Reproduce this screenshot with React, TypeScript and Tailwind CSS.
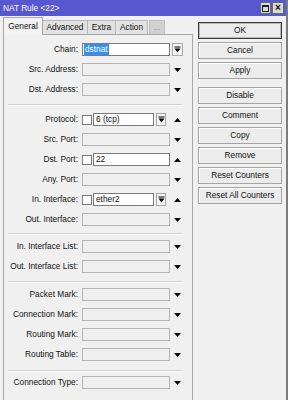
import React from 'react';

const DownArrow = () => (
  <svg width="7" height="4" viewBox="0 0 7 4" className="block">
    <polygon points="0,0 7,0 3.5,4" fill="#000" />
  </svg>
);

const UpArrow = () => (
  <svg width="7" height="4" viewBox="0 0 7 4" className="block">
    <polygon points="0,4 7,4 3.5,0" fill="#000" />
  </svg>
);

const DropButton = ({ className = '' }: { className?: string }) => (
  <div className={`h-full flex items-center justify-center bg-[#f4f4f4] border border-[#a8a8a8] ${className}`}>
    <svg width="7" height="7" viewBox="0 0 7 7" className="block">
      <rect x="0.5" y="0.5" width="6" height="1" fill="#000" />
      <polygon points="0.5,2.5 6.5,2.5 3.5,6.5" fill="#000" />
    </svg>
  </div>
);

const Check = () => <div className="w-[10px] h-[10px] bg-white border border-[#7a7a7a] shrink-0" />;

const Empty = () => <div className="w-full h-full bg-[#f0f0f0] border border-[#b4b4b4]" />;

const Input = ({ value, selected, className = '' }: { value: string; selected?: boolean; className?: string }) => (
  <div className={`h-full bg-white border border-[#7a7a7a] flex items-center pl-[1px] ${className}`}>
    {selected ? (
      <span className="bg-[#3390f0] text-white px-[1px] leading-[11px]">{value}</span>
    ) : (
      <span className="px-[1px]">{value}</span>
    )}
  </div>
);

const Row = ({
  label,
  children,
  arrow,
  className = '',
}: {
  label: string;
  children: React.ReactNode;
  arrow?: React.ReactNode;
  className?: string;
}) => (
  <div className={`flex items-center h-[13px] ${className}`}>
    <div className="w-[74px] text-right whitespace-nowrap">{label}:</div>
    <div className="ml-[4px] w-[88px] h-full flex items-center">{children}</div>
    <div className="w-[14px] h-full flex items-center justify-center">{arrow}</div>
  </div>
);

const Sep = ({ className = '' }: { className?: string }) => (
  <div className={`ml-[4px] w-[175px] h-[2px] border-t border-[#d2d2d2] border-b border-b-white ${className}`} />
);

const Btn = ({ label, primary, className = '' }: { label: string; primary?: boolean; className?: string }) => (
  <div
    className={`h-[17px] w-[84px] flex items-center justify-center bg-[#ececec] ${
      primary
        ? 'border border-[#3c3c3c] shadow-[inset_0_0_0_1px_#b8b8b8]'
        : 'border border-[#a4a4a4] shadow-[inset_1px_1px_0_#ffffff]'
    } ${className}`}
  >
    {label}
  </div>
);

const tabs = [
  { name: 'Advanced', w: 'w-[45px]' },
  { name: 'Extra', w: 'w-[28px]' },
  { name: 'Action', w: 'w-[32px]' },
];

export default function App() {
  return (
    <div
      className="w-[288px] h-[400px] overflow-hidden bg-[#f0f0f0] border-r-2 border-[#7c7c7c] flex flex-col text-[8.3px] text-[#111] leading-none"
      style={{ fontFamily: '"Liberation Sans", Arial, sans-serif' }}
    >
      {/* Title bar */}
      <div className="h-[16px] bg-[#5757cf] flex items-center pl-[3px] pr-[2px] text-white">
        <span className="flex-1">NAT Rule &lt;22&gt;</span>
        <div className="flex gap-[1px]">
          <div className="w-[11px] h-[12px] bg-[#d8d8d8] border border-[#6a6a6a] flex items-center justify-center">
            <div className="w-[7px] h-[7px] border border-[#222] border-t-2" />
          </div>
          <div className="w-[12px] h-[12px] bg-[#d8d8d8] border border-[#6a6a6a] flex items-center justify-center text-[#111] text-[10px] font-bold">
            ×
          </div>
        </div>
      </div>

      <div className="flex flex-1">
        {/* Left side: tabs and form */}
        <div className="w-[193px] pl-[3px] flex flex-col">
          <div className="h-[18px] flex items-end">
            <div className="relative z-10 -mb-[1px] w-[40px] h-[18px] bg-[#f3f3f3] border border-b-0 border-[#a8a8a8] flex items-center justify-center">
              General
            </div>
            {tabs.map(t => (
              <div
                key={t.name}
                className={`${t.w} h-[14px] bg-[#e2e2e2] border border-b-0 border-l-0 border-[#b8b8b8] flex items-center justify-center`}
              >
                {t.name}
              </div>
            ))}
            <div className="ml-[1px] w-[16px] h-[14px] bg-[#d2d2d2] border border-b-0 border-[#bdbdbd] flex items-center justify-center text-[#8a8a8a]">
              ...
            </div>
          </div>

          <div className="flex-1 border border-b-0 border-[#a8a8a8] pt-[8px] flex flex-col">
            <Row label="Chain" arrow={<DropButton className="ml-[1px] w-[11px]" />}>
              <Input value="dstnat" selected className="w-full" />
            </Row>
            <Row label="Src. Address" arrow={<DownArrow />} className="mt-[7px]">
              <Empty />
            </Row>
            <Row label="Dst. Address" arrow={<DownArrow />} className="mt-[7px]">
              <Empty />
            </Row>

            <Sep className="mt-[8px]" />

            <Row label="Protocol" arrow={<UpArrow />} className="mt-[7px]">
              <Check />
              <Input value="6 (tcp)" className="ml-[1px] flex-1" />
              <DropButton className="ml-[2px] mr-[4px] w-[10px]" />
            </Row>
            <Row label="Src. Port" arrow={<DownArrow />} className="mt-[7px]">
              <Empty />
            </Row>
            <Row label="Dst. Port" arrow={<UpArrow />} className="mt-[7px]">
              <Check />
              <Input value="22" className="ml-[1px] flex-1" />
            </Row>
            <Row label="Any. Port" arrow={<DownArrow />} className="mt-[7px]">
              <Empty />
            </Row>
            <Row label="In. Interface" arrow={<UpArrow />} className="mt-[7px]">
              <Check />
              <Input value="ether2" className="ml-[1px] flex-1" />
              <DropButton className="ml-[2px] mr-[4px] w-[10px]" />
            </Row>
            <Row label="Out. Interface" arrow={<DownArrow />} className="mt-[7px]">
              <Empty />
            </Row>

            <Sep className="mt-[7px]" />

            <Row label="In. Interface List" arrow={<DownArrow />} className="mt-[5px]">
              <Empty />
            </Row>
            <Row label="Out. Interface List" arrow={<DownArrow />} className="mt-[7px]">
              <Empty />
            </Row>

            <Sep className="mt-[8px]" />

            <Row label="Packet Mark" arrow={<DownArrow />} className="mt-[5px]">
              <Empty />
            </Row>
            <Row label="Connection Mark" arrow={<DownArrow />} className="mt-[7px]">
              <Empty />
            </Row>
            <Row label="Routing Mark" arrow={<DownArrow />} className="mt-[7px]">
              <Empty />
            </Row>
            <Row label="Routing Table" arrow={<DownArrow />} className="mt-[7px]">
              <Empty />
            </Row>

            <Sep className="mt-[9px]" />

            <Row label="Connection Type" arrow={<DownArrow />} className="mt-[4px]">
              <Empty />
            </Row>
          </div>
        </div>

        {/* Right side: buttons */}
        <div className="flex-1 pl-[5px] pt-[6px] flex flex-col gap-[3px]">
          <Btn label="OK" primary />
          <Btn label="Cancel" />
          <Btn label="Apply" />
          <Btn label="Disable" className="mt-[5px]" />
          <Btn label="Comment" />
          <Btn label="Copy" />
          <Btn label="Remove" />
          <Btn label="Reset Counters" />
          <Btn label="Reset All Counters" />
        </div>
      </div>
    </div>
  );
}
